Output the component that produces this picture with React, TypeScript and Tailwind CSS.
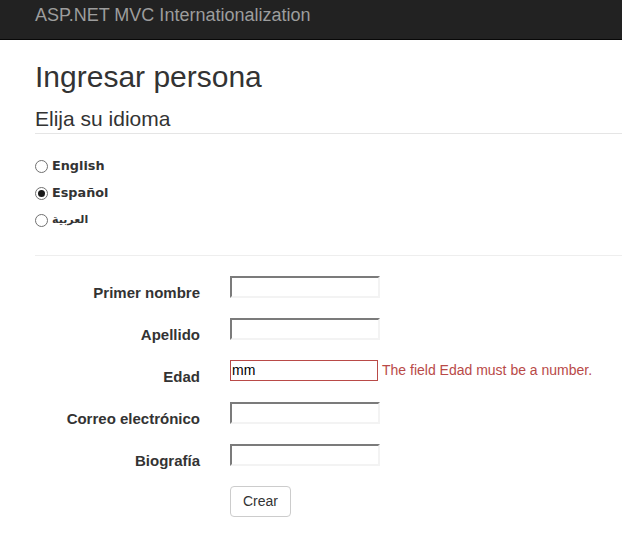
import React from 'react';

const fields = [
    { label: 'Primer nombre', value: '', error: '' },
    { label: 'Apellido', value: '', error: '' },
    { label: 'Edad', value: 'mm', error: 'The field Edad must be a number.' },
    { label: 'Correo electrónico', value: '', error: '' },
    { label: 'Biografía', value: '', error: '' },
];

const languages = [
    { label: 'English', checked: false },
    { label: 'Español', checked: true },
    { label: 'العربية', checked: false },
];

const Radio = ({ checked }: { checked: boolean }) => (
    <span className="w-[13px] h-[13px] rounded-full border border-[#707070] bg-white flex items-center justify-center flex-shrink-0">
        {checked && <span className="w-[7px] h-[7px] rounded-full bg-[#1a1a1a]" />}
    </span>
);

export default function App() {
    return (
        <div className="w-[622px] h-[535px] overflow-hidden bg-white font-['Liberation_Sans',Arial,sans-serif] text-[#333]">
            {/* Navbar */}
            <div className="h-[40px] bg-[#222] border-b border-[#080808] pl-[35px] pt-[4px]">
                <span className="text-[18px] leading-[20px] text-[#9d9d9d]">ASP.NET MVC Internationalization</span>
            </div>

            <div className="pl-[35px]">
                <h2 className="mt-[20px] text-[30px] leading-[33px] text-[#333]">Ingresar persona</h2>
                <h3 className="mt-[14px] text-[21px] leading-[23px] pb-[3px] border-b border-[#e5e5e5] text-[#333]">
                    Elija su idioma
                </h3>

                {/* Language choice */}
                <div className="mt-[22px] flex flex-col gap-[7px] font-['DejaVu_Sans',Verdana,sans-serif]">
                    {languages.map((lang) => (
                        <label key={lang.label} className="flex items-center gap-[4px] h-[20px]">
                            <Radio checked={lang.checked} />
                            <span className={lang.label === 'العربية' ? 'text-[11px] font-bold text-[#333]' : 'text-[12.8px] font-bold text-[#333]'}>
                                {lang.label}
                            </span>
                        </label>
                    ))}
                </div>

                <div className="mt-[25px] border-t border-[#eee]" />

                {/* Form */}
                <div className="mt-[20px] grid grid-cols-[165px_1fr] gap-x-[30px]">
                    {fields.map((f) => (
                        <React.Fragment key={f.label}>
                            <div className="pt-[7px] leading-[20px] text-[15px] font-bold text-right mb-[15px]">{f.label}</div>
                            <div className="flex items-start mb-[15px]">
                                {f.error ? (
                                    <>
                                        <div className="w-[148px] h-[21px] border border-[#b94a48] px-[1px] text-[14px] leading-[19px] text-black">
                                            {f.value}
                                        </div>
                                        <span className="ml-[4px] text-[14px] leading-[20px] text-[#b94a48]">{f.error}</span>
                                    </>
                                ) : (
                                    <div className="w-[150px] h-[22px] border-2 border-t-[#7b7b7b] border-l-[#7b7b7b] border-r-[#f3f3f3] border-b-[#f3f3f3]" />
                                )}
                            </div>
                        </React.Fragment>
                    ))}
                    <div />
                    <div>
                        <button className="h-[31px] px-[12px] border border-[#ccc] rounded-[4px] bg-white text-[14px] text-[#333]">
                            Crear
                        </button>
                    </div>
                </div>
            </div>
        </div>
    );
}
